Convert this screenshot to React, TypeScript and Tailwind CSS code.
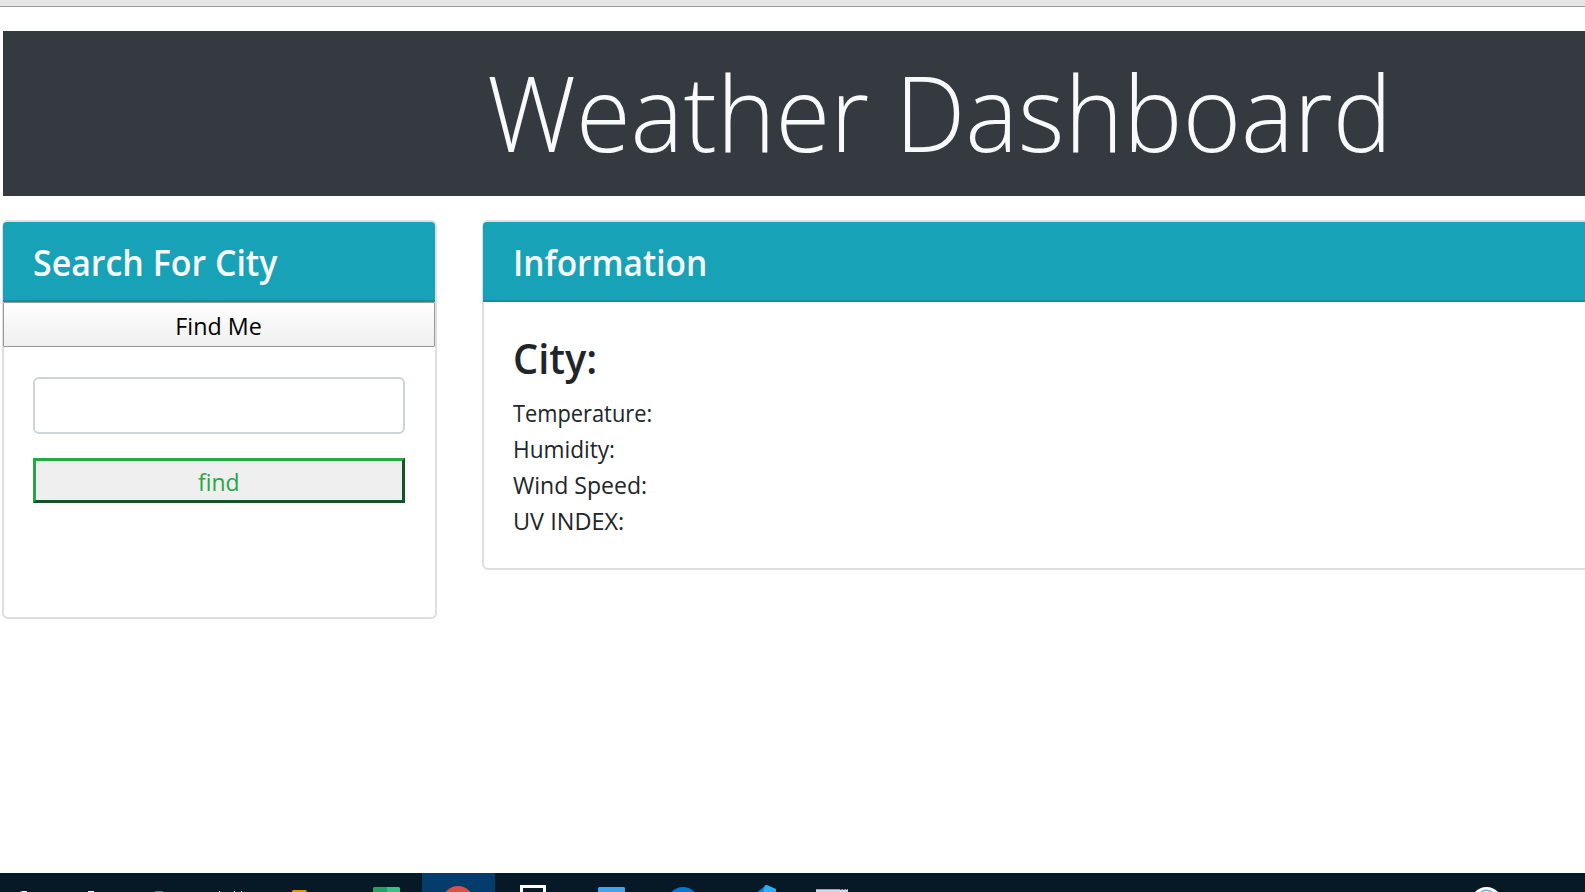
import type { ReactNode } from 'react';

const readings = [
  { label: 'Temperature:', fit: 'scale-x-[0.909]' },
  { label: 'Humidity:', fit: 'scale-x-[0.942]' },
  { label: 'Wind Speed:', fit: 'scale-x-[0.96]' },
  { label: 'UV INDEX:', fit: 'scale-x-[0.978]' },
];

function CardHeader({ fit, children }: { fit: string; children: ReactNode }) {
  return (
    <div className="-ml-px h-20 rounded-t-[4px] border-b-2 border-[#148ea1] bg-[#17a2b8] pt-[19px] pl-[30px]">
      <h3 className={`w-fit origin-left text-4xl leading-[43px] font-semibold whitespace-nowrap text-[#f8f9fa] ${fit}`}>
        {children}
      </h3>
    </div>
  );
}

function SearchCard() {
  return (
    <section className="h-[399px] w-[435px] shrink-0 rounded-[6px] border-2 border-[#dfdfdf] bg-white">
      <CardHeader fit="scale-x-[0.942]">Search For City</CardHeader>
      <button className="-ml-px flex h-[45px] w-[432px] items-center justify-center rounded-[1px] border border-[#999] bg-linear-to-b from-white to-[#efefef] pt-[3px] text-2xl text-black">
        <span className="scale-x-[0.97]">Find Me</span>
      </button>
      <div className="flex flex-col gap-6 px-[29px] pt-[30px]">
        <input
          type="text"
          aria-label="City"
          className="h-[57px] w-[372px] rounded-[6px] border-2 border-[#ced4da] bg-white px-4 text-2xl"
        />
        <button className="flex h-[45px] w-[372px] items-center justify-center border-3 border-t-[#28a745] border-r-[#145523] border-b-[#145523] border-l-[#28a745] bg-[#efefef] pt-[2px] text-2xl text-[#28a745]">
          <span className="scale-x-[0.955]">find</span>
        </button>
      </div>
    </section>
  );
}

function InformationCard() {
  return (
    <section className="h-[350px] w-[1140px] shrink-0 rounded-[6px] border-2 border-[#dfdfdf] bg-white">
      <CardHeader fit="scale-x-[0.931]">Information</CardHeader>
      <div className="px-[29px] pt-[31px]">
        <h2 className="mb-3 w-fit origin-left scale-x-[0.945] text-[42px] leading-[50px] font-semibold">City:</h2>
        {readings.map(({ label, fit }) => (
          <p key={label} className={`w-fit origin-left text-2xl leading-9 ${fit}`}>
            {label}
          </p>
        ))}
      </div>
    </section>
  );
}

function Taskbar() {
  return (
    <footer className="h-[19px] shrink-0 bg-[#071926]">
      <svg width="1585" height="19" viewBox="0 0 1585 19" className="block">
        <rect x="422" width="73" height="19" fill="#043c6b" />
        <g fill="#fff">
          <rect x="22" y="18" width="5" height="1" />
          <rect x="88" y="18" width="6" height="1" />
          <rect x="219" y="18" width="1" height="1" />
          <rect x="234" y="18" width="1" height="1" />
          <rect x="241" y="18" width="1" height="1" />
        </g>
        <rect x="20" y="18" width="2" height="1" fill="#6d7880" />
        <rect x="155" y="18" width="8" height="1" fill="#6d7880" />
        <path d="M292 19v-1l1-1h13l1 2z" fill="#dd9a00" />
        <path d="M373 19v-4l1-1h13v5z" fill="#21a366" />
        <path d="M387 14h12l1 1v4h-13z" fill="#33c481" />
        <circle cx="458" cy="29" r="16" fill="#dd5144" />
        <path d="M521.5 19v-5.5h23V19" fill="none" stroke="#fff" strokeWidth="3" />
        <path d="M598 19v-4l1-1h25l1 1v4z" fill="#41a5ee" />
        <circle cx="683" cy="30" r="16" fill="#0078d7" />
        <path d="M757.500 19l8.500-7v7z" fill="#0b86c6" />
        <path d="M765 12.500l2-.5 9 4v3h-13z" fill="#29b0f6" />
        <rect x="816" y="16" width="32" height="3" fill="#d5d8e2" />
        <path d="M816 16.500h32" stroke="#9da2ae" strokeWidth="1" />
        <path d="M840 16.500h1.500M843 16.500h1.500M846 16.500h1" stroke="#3d4450" />
        <circle cx="1486.500" cy="30" r="16" fill="#fff" />
        <path d="M1481 19q5.500-3.500 11 0" fill="none" stroke="#55b9e8" strokeWidth="1.500" />
      </svg>
    </footer>
  );
}

export default function App() {
  return (
    <div className="flex h-[892px] w-[1585px] flex-col overflow-hidden bg-white font-['Open_Sans',sans-serif] text-[#212529]">
      <div className="h-[7px] shrink-0 border-b border-[#999] bg-[#e5e5e5]" />
      <header className="mt-6 ml-[3px] h-[165px] shrink-0 bg-[#343a40] pt-5 pl-[484px]">
        <h1 className="w-fit origin-left scale-x-[0.94] text-[106px] leading-[120px] font-light whitespace-nowrap text-[#f8f9fa]">
          Weather Dashboard
        </h1>
      </header>
      <main className="mt-6 ml-[2px] flex grow items-start gap-[45px]">
        <SearchCard />
        <InformationCard />
      </main>
      <Taskbar />
    </div>
  );
}
